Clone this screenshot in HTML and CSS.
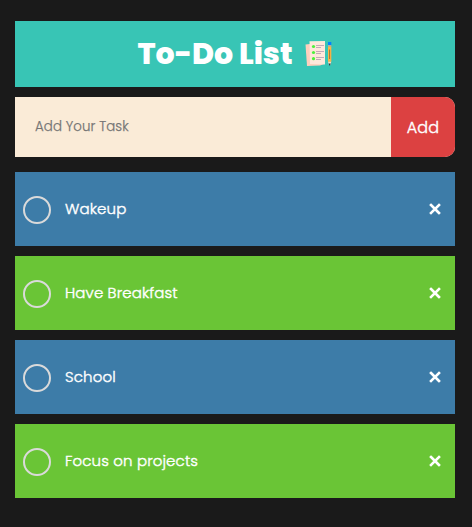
FILE: index.html
```html
<!DOCTYPE html>
<html lang="en">
<head>
<meta charset="utf-8">
<title>To-Do List</title>
<link rel="stylesheet" href="styles.css">
</head>
<body>
<main class="app">
  <h1 class="title"><span>To-Do List</span>
    <svg class="title-icon" viewBox="0 0 28 28" aria-hidden="true">
      <path fill="#ffcfbd" d="M0.500 4.500 5 4l14 20-4 1.400L2 26z"/>
      <path fill="#ffe8db" d="M4.500 1.200 20 1v23.500L5 24z"/>
      <g fill="#4df13e"><circle cx="8.500" cy="6.500" r="1.600"/><circle cx="8.500" cy="12.500" r="1.600"/><circle cx="8.500" cy="18.700" r="1.600"/></g>
      <path stroke="#b49bb0" stroke-width=".8" d="M11 5.500h8M11 7.500h5M11 11.500h8M11 13.500h5M11 17.500h8M11 19.500h5"/>
      <path fill="#0084ff" d="M23 2h3.300v3.300H23z"/>
      <path fill="#d9a5a0" d="M23 5.200h3.300v1.300H23z"/>
      <path fill="#ffb444" d="M23 6.500h3.300v15.300H23z"/>
      <path stroke="#a5763c" d="M24.600 9.500v9.500"/>
      <path fill="#ffdcc1" d="M23 21.800h3.300l-1.100 3.200h-1.100z"/>
      <path fill="#3b3443" d="M23.700 23.600h1.900l-.6 1.900h-.7z"/>
    </svg>
  </h1>
  <form class="task-form">
    <input class="task-input" type="text" placeholder="Add Your Task" aria-label="Task">
    <button class="add-button" type="button">Add</button>
  </form>
  <ul class="tasks">
    <li class="task"><span class="check"></span><span class="label">Wakeup</span><svg class="close" viewBox="0 0 12 12"><path d="M2 2l8 8M10 2l-8 8"/></svg></li>
    <li class="task"><span class="check"></span><span class="label">Have Breakfast</span><svg class="close" viewBox="0 0 12 12"><path d="M2 2l8 8M10 2l-8 8"/></svg></li>
    <li class="task"><span class="check"></span><span class="label">School</span><svg class="close" viewBox="0 0 12 12"><path d="M2 2l8 8M10 2l-8 8"/></svg></li>
    <li class="task"><span class="check"></span><span class="label">Focus on projects</span><svg class="close" viewBox="0 0 12 12"><path d="M2 2l8 8M10 2l-8 8"/></svg></li>
  </ul>
</main>
</body>
</html>
```
FILE: styles.css
```css
* { box-sizing: border-box; margin: 0; padding: 0; }
body {
  background: #1a1a1a;
  color: #fff;
  font-family: Poppins, Inter, sans-serif;
}
.app { width: 440px; margin: 21px 0 0 15px; }
.title {
  display: flex;
  align-items: center;
  height: 66px;
  padding-left: 122.5px;
  background: #38c5b5;
  font-size: 30px;
  font-weight: 800;
  line-height: 64px;
  white-space: nowrap;
}
.title span { width: 156px; }
.title-icon { width: 28px; height: 28px; margin-left: 11px; }
.task-form {
  display: flex;
  height: 60px;
  margin: 10px 0 15px;
  background: #faebd7;
  border-radius: 0 10px 10px 0;
}
.task-input {
  width: 376px;
  padding: 0 20px;
  border: 0;
  outline: 0;
  background: transparent;
  font: 300 13.33px Poppins, Inter, sans-serif;
  letter-spacing: 0.1px;
  -webkit-text-stroke: 0.25px #757575;
}
.task-input::placeholder { color: #757575; }
.add-button {
  width: 64px;
  border: 0;
  border-radius: 0 10px 10px 0;
  background: #dc4141;
  color: #fff;
  font: 300 16px Poppins, Inter, sans-serif;
  letter-spacing: 0.2px;
  -webkit-text-stroke: 0.4px #fff;
}
.tasks { display: grid; gap: 10px; list-style: none; }
.task {
  display: flex;
  align-items: center;
  height: 74px;
  padding: 0 14px 0 8px;
  background: #3d7ca8;
  font-size: 15px;
  font-weight: 300;
  letter-spacing: 0.13px;
}
.task:nth-child(even) { background: #6ac536; }
.check {
  width: 28px;
  height: 28px;
  margin: 2px 14px 0 0;
  border: 2px solid #dadada;
  border-radius: 50%;
}
.label { flex: 1; padding-bottom: 1px; -webkit-text-stroke: 0.4px #fff; }
.close { width: 12px; height: 12px; }
.close path { stroke: #fff; stroke-width: 2.6; stroke-linecap: square; }
```
